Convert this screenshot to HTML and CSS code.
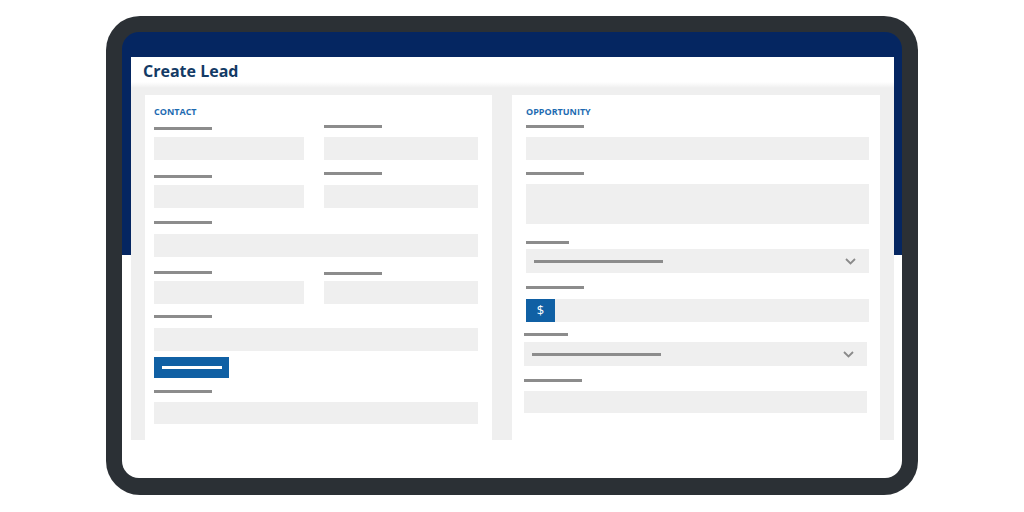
FILE: index.html
```html
<!DOCTYPE html>
<html lang="en">
<head>
<meta charset="utf-8">
<title>Create Lead</title>
<link rel="stylesheet" href="styles.css">
</head>
<body>
<div class="device">
  <div class="screen">
    <div class="card">
      <div class="card-head"><h1 class="title">Create Lead</h1></div>
      <div class="card-body">
        <section class="panel panel-contact">
          <h2 class="section-title">CONTACT</h2>
          <div class="row row-1">
            <div class="field"><div class="lbl m7"></div><div class="inp"></div></div>
            <div class="field"><div class="lbl m9"></div><div class="inp"></div></div>
          </div>
          <div class="row row-2">
            <div class="field"><div class="lbl m7"></div><div class="inp"></div></div>
            <div class="field"><div class="lbl m10"></div><div class="inp"></div></div>
          </div>
          <div class="row row-3">
            <div class="field full"><div class="lbl m10"></div><div class="inp"></div></div>
          </div>
          <div class="row row-4">
            <div class="field"><div class="lbl m7"></div><div class="inp"></div></div>
            <div class="field"><div class="lbl m6"></div><div class="inp"></div></div>
          </div>
          <div class="row row-5">
            <div class="field full"><div class="lbl m10"></div><div class="inp"></div></div>
          </div>
          <button class="btn" type="button"><span class="btn-bar"></span></button>
          <div class="row row-6">
            <div class="field full"><div class="lbl m9"></div><div class="inp inp-22"></div></div>
          </div>
        </section>
        <section class="panel panel-opp">
          <h2 class="section-title">OPPORTUNITY</h2>
          <div class="ofield of-1"><div class="lbl m9"></div><div class="inp"></div></div>
          <div class="ofield of-2"><div class="lbl m9"></div><div class="inp textarea"></div></div>
          <div class="ofield of-3"><div class="lbl lbl-43 m5"></div>
            <div class="select"><span class="select-bar"></span>
              <svg class="chev" width="11" height="7" viewBox="0 0 11 7"><polyline points="1,1 5.5,5.5 10,1"/></svg>
            </div>
          </div>
          <div class="ofield of-4"><div class="lbl m10"></div>
            <div class="inp money"><span class="cur">$</span></div>
          </div>
          <div class="ofield of-5 shift"><div class="lbl lbl-44 m6"></div>
            <div class="select"><span class="select-bar"></span>
              <svg class="chev" width="11" height="7" viewBox="0 0 11 7"><polyline points="1,1 5.5,5.5 10,1"/></svg>
            </div>
          </div>
          <div class="ofield of-6 shift"><div class="lbl m9"></div><div class="inp inp-22"></div></div>
        </section>
      </div>
    </div>
  </div>
</div>
</body>
</html>
```

FILE: styles.css
```css
* { box-sizing: border-box; }
html, body { margin: 0; padding: 0; background: #fff; }
body { width: 1024px; height: 512px; overflow: hidden; font-family: "Open Sans", "Noto Sans", sans-serif; }

.device {
  margin: 16px 0 0 106px;
  width: 812px;
  height: 479px;
  padding: 16px 16px 17px 16px;
  background: #2b3035;
  border-radius: 34px;
}
.screen {
  width: 780px;
  height: 446px;
  border-radius: 17px;
  overflow: hidden;
  background: linear-gradient(to bottom, #052661 0, #052661 223px, #ffffff 223px);
  padding: 25px 8px 0 9px;
}
.card {
  width: 763px;
  height: 383px;
  overflow: hidden;
  background: #efefef;
}
.card-head {
  height: 31px;
  padding-left: 12px;
  background: linear-gradient(to bottom, #ffffff 0, #ffffff 25px, #efefef 31px);
}
.title {
  margin: 0;
  font-size: 16px;
  line-height: 29px;
  font-weight: 700;
  color: #133a65;
}
.card-body {
  height: 352px;
  padding: 7px 14px 0 14px;
  display: flex;
  gap: 20px;
}
.panel {
  background: #fff;
  padding-top: 11px;
}
.panel-contact { width: 347px; padding-left: 9px; padding-right: 14px; }
.panel-opp { width: 368px; padding-left: 14px; padding-right: 11px; }

.section-title {
  margin: 0;
  font-size: 9px;
  line-height: 12px;
  font-weight: 700;
  color: #1d6bb1;
}

.lbl { width: 58px; height: 3px; background: #8c8c8c; }
.lbl-43 { width: 43px; }
.lbl-44 { width: 44px; }
.m5 { margin-bottom: 5px; }
.m6 { margin-bottom: 6px; }
.m7 { margin-bottom: 7px; }
.m9 { margin-bottom: 9px; }
.m10 { margin-bottom: 10px; }

.inp { height: 23px; background: #efefef; }
.inp-22 { height: 22px; }
.textarea { height: 40px; }

.row {
  display: grid;
  grid-template-columns: 150px 154px;
  column-gap: 20px;
  align-items: end;
}
.field.full { grid-column: 1 / -1; }
.row-1 { margin-top: 7px; }
.row-2 { margin-top: 12px; }
.row-3 { margin-top: 13px; }
.row-4 { margin-top: 14px; }
.row-5 { margin-top: 11px; }
.row-6 { margin-top: 12px; }

.btn {
  display: flex;
  align-items: center;
  justify-content: center;
  margin: 6px 0 0 0;
  padding: 0;
  border: 0;
  width: 75px;
  height: 21px;
  background: #1060a4;
}
.btn-bar { display: block; width: 60px; height: 3px; background: #fff; }

.of-1 { margin-top: 7px; }
.of-2 { margin-top: 12px; }
.of-3 { margin-top: 17px; }
.of-4 { margin-top: 13px; }
.of-5 { margin-top: 11px; }
.of-6 { margin-top: 13px; }
.shift { margin-left: -2px; margin-right: 2px; }

.select {
  height: 24px;
  background: #efefef;
  display: flex;
  align-items: center;
  justify-content: space-between;
  padding: 0 13px 0 8px;
}
.select-bar { display: block; width: 129px; height: 3px; background: #8c8c8c; }
.chev { display: block; }
.chev polyline { fill: none; stroke: #8a8a8a; stroke-width: 1.8; }

.money { display: flex; }
.cur {
  width: 29px;
  height: 23px;
  background: #1060a4;
  color: #fff;
  font-size: 13px;
  line-height: 23px;
  text-align: center;
}
```
